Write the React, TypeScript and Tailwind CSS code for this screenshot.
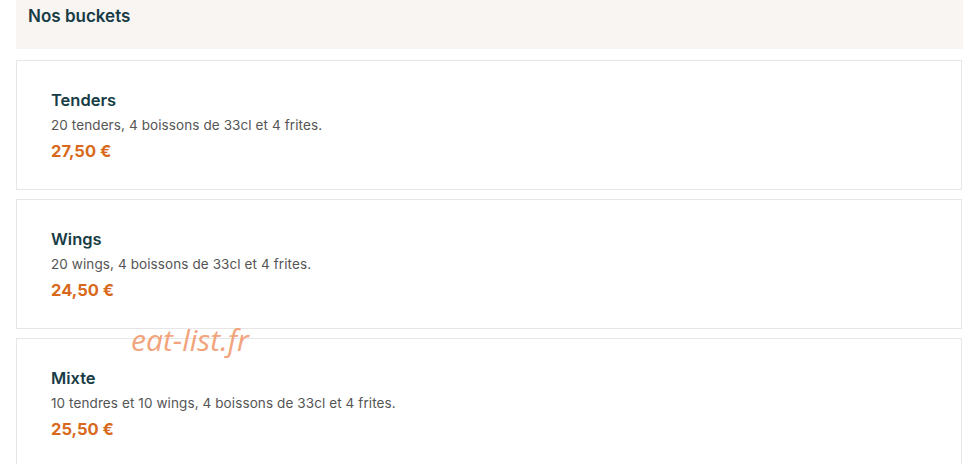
import React from "react";

const buckets = [
  { name: "Tenders", desc: "20 tenders, 4 boissons de 33cl et 4 frites.", price: "27,50 €" },
  { name: "Wings", desc: "20 wings, 4 boissons de 33cl et 4 frites.", price: "24,50 €" },
  { name: "Mixte", desc: "10 tendres et 10 wings, 4 boissons de 33cl et 4 frites.", price: "25,50 €" },
];

export default function App() {
  return (
    <div className="relative h-[464px] w-[978px] overflow-hidden bg-white font-['Inter',sans-serif]">
      <div className="ml-4 mr-[15px] flex h-[49px] items-start bg-[#f8f5f2] px-3 pt-[4px]">
        <h2 className="text-[17px] font-semibold text-[#183c45]">Nos buckets</h2>
      </div>
      <div className="ml-4 mr-4 mt-[11px] flex flex-col gap-[9px]">
        {buckets.map((b) => (
          <div key={b.name} className="h-[130px] border border-[#e6e6e6] bg-white pl-[34px] pt-[28px]">
            <h3 className="text-[16.5px] font-semibold leading-[22px] text-[#183c45]">{b.name}</h3>
            <p className="mt-[5px] text-[13.5px] leading-[18px] tracking-[0.1px] text-[#555]">{b.desc}</p>
            <p className="mt-[7px] text-[16.5px] font-bold leading-[20px] text-[#d8691c]">{b.price}</p>
          </div>
        ))}
      </div>
      <span className="absolute left-[131px] top-[320px] font-['Open_Sans',sans-serif] text-[30px] italic leading-[40px] text-[#f3a47c]">
        eat-list.fr
      </span>
    </div>
  );
}
